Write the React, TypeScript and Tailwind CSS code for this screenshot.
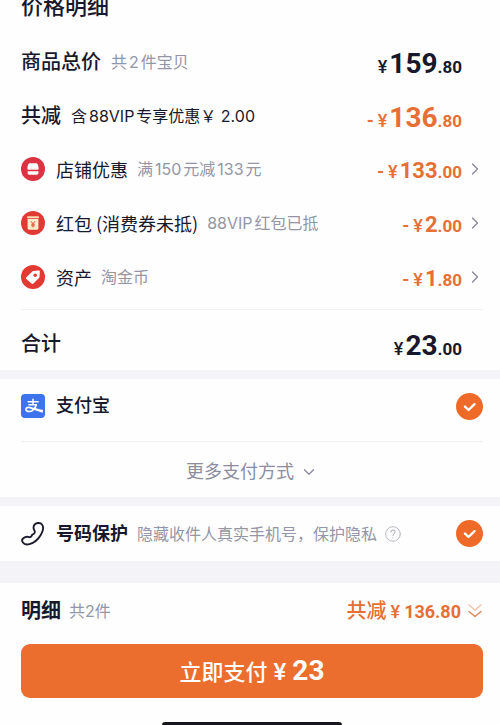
import { useState } from "react";
import type { ReactNode } from "react";
import { ChevronDown, ChevronRight } from "lucide-react";

interface PriceProps {
    whole: string;
    cents: string;
    minus?: boolean;
    large?: boolean;
}

interface Discount {
    id: string;
    label: string;
    note: string;
    whole: string;
    cents: string;
    icon: ReactNode;
}

function StoreIcon() {
    return (
        <svg viewBox="0 0 24 24" className="size-6 shrink-0" aria-hidden="true">
            <circle cx="12" cy="12" r="12" fill="#dc3242" />
            <path d="M8.500 6.200h7c1.300 0 2.100 2.600 2.100 5.600 0 .7-.8 1-1.600 1H8c-.8 0-1.600-.3-1.600-1 0-3 .8-5.600 2.100-5.600z" fill="#fff" />
            <path d="M6.600 14.200h10.800v1.800c0 1-.6 1.700-1.700 1.700H8.300c-1.100 0-1.700-.7-1.700-1.700z" fill="#fff" />
            <path d="M6.400 11.600c1.600 1.600 2.800.3 3.700.3s1 .8 1.900.8 1-.8 1.900-.8 2.100 1.300 3.700-.3" fill="none" stroke="#f3a9b0" strokeWidth=".6" />
        </svg>
    );
}

function RedPacketIcon() {
    return (
        <svg viewBox="0 0 24 24" className="size-6 shrink-0" aria-hidden="true">
            <circle cx="12" cy="12" r="12" fill="#e03a35" />
            <rect x="6" y="5.200" width="12" height="2" rx=".8" fill="#fbdcb4" />
            <path d="M6.600 8h10.800v9.300c0 .9-.5 1.400-1.400 1.400H8c-.9 0-1.400-.5-1.400-1.400z" fill="#fdeccb" />
            <path d="M10 10.200l2 2.500 2-2.500M12 12.700v3.800M10.200 13.200h3.600M10.200 14.900h3.600" fill="none" stroke="#e0503a" strokeWidth="1" />
        </svg>
    );
}

function TagIcon() {
    return (
        <svg viewBox="0 0 24 24" className="size-6 shrink-0" aria-hidden="true">
            <circle cx="12" cy="12" r="12" fill="#e23a33" />
            <path d="M12.300 6.100l5.300-.5c.8-.1 1.300.4 1.200 1.200l-.3 5.200c0 .4-.2.7-.5 1l-5.600 5.600c-.6.6-1.300.6-1.900 0l-5.100-4.500c-.6-.6-.6-1.300 0-1.900l5.900-5.700c.3-.2.6-.4 1-.4z" fill="#fff" />
            <circle cx="14.200" cy="10.200" r="1.700" fill="#e23a33" />
        </svg>
    );
}

function AlipayIcon() {
    return (
        <svg viewBox="0 0 24 24" className="size-6 shrink-0" aria-hidden="true">
            <rect width="24" height="24" rx="4" fill="#3d74ee" />
            <g fill="none" stroke="#fff" strokeLinejoin="round">
                <path d="M6.600 7.700h11M12 4.800v5.700M7.400 10.700h8.400" strokeWidth="1.500" />
                <path d="M15.400 10.500c-.9 3-3.200 7-7.200 7-2.300 0-3.500-1.100-3.300-2.300.3-1.300 1.900-2 3.900-1.600 2.800.5 6.400 2.100 8.700 2.900" strokeWidth="1.700" />
            </g>
            <path d="M13 13.200c3 1.300 6 2.300 9.200 2.800l-.7 2.800c-3.200-.8-6.500-2.400-9.300-4z" fill="#fff" />
        </svg>
    );
}

function PhoneIcon() {
    return (
        <svg viewBox="0 0 24 24" className="size-6 shrink-0" fill="none" stroke="#1b1b2d" strokeWidth="1.900" strokeLinejoin="round" aria-hidden="true">
            <path d="M14.200 2c1.900-1.500 5.300-1.300 6.800.5 1.800 2.300 1.200 6.300-1.100 10.300-2.500 4.300-6.800 8.100-11.400 9.300-2.700.7-5.400.1-6.600-1.600-1-1.400-.9-3.200.4-4.200 1.600-1.300 4.300-1.700 6-1.200 1.300.4 1.600-.2 2.200-1 .3-.6.300-1.200 1-1.500 1.200-.5 2.300-1.300 2.400-2.600.1-1.100-.9-1.800-1.200-3.300-.4-1.700.2-3.700 1.500-4.700z" />
        </svg>
    );
}

function HelpIcon() {
    return (
        <svg viewBox="0 0 16 16" className="size-4" fill="none" stroke="#b9bac4" strokeLinecap="round" aria-hidden="true">
            <circle cx="8" cy="8" r="7.300" />
            <path d="M5.900 6.300c0-1.300.9-2.100 2.100-2.100s2.100.8 2.100 1.900c0 1.400-2.100 1.700-2.100 3.400M8 11.500v.2" strokeWidth="1.200" />
        </svg>
    );
}

function DoubleChevron() {
    return (
        <svg viewBox="0 0 16 16" className="size-4 shrink-0" fill="none" strokeWidth="1.500" strokeLinecap="round" strokeLinejoin="round" aria-hidden="true">
            <path d="M2 2l6 5 6-5" stroke="#f3c4ac" />
            <path d="M2 8.500l6 5 6-5" stroke="#e08a60" />
        </svg>
    );
}

function Price({ whole, cents, minus, large }: PriceProps) {
    return (
        <span className="flex items-baseline pt-1 font-[Roboto,sans-serif] font-bold">
            {minus && <span className="mr-1 text-lg leading-none">-</span>}
            <span className="mr-0.5 text-lg leading-none font-medium">¥</span>
            <span className={large ? "text-[28px] leading-none" : "text-[22px] leading-none"}>{whole}</span>
            <span className="text-[17px] leading-none">.{cents}</span>
        </span>
    );
}

function RoundCheck({ id, checked, onChange }: { id: string; checked: boolean; onChange: () => void }) {
    return (
        <span className="relative flex size-[27px] shrink-0">
            <input
                id={id}
                type="checkbox"
                checked={checked}
                onChange={onChange}
                className="peer size-full cursor-pointer appearance-none rounded-full border border-gray-300 checked:border-transparent checked:bg-[#ef6a28]"
            />
            <svg viewBox="0 0 27 27" className="pointer-events-none absolute inset-0 hidden peer-checked:block" fill="none" stroke="#fff" strokeWidth="2.400" strokeLinecap="round" strokeLinejoin="round" aria-hidden="true">
                <path d="M9 13.600l3.500 3.400 6-5.800" />
            </svg>
        </span>
    );
}

const discounts: Discount[] = [
    { id: 'store', label: '店铺优惠', note: '满150元减133元', whole: '133', cents: '00', icon: <StoreIcon /> },
    { id: 'packet', label: '红包 (消费券未抵)', note: '88VIP红包已抵', whole: '2', cents: '00', icon: <RedPacketIcon /> },
    { id: 'asset', label: '资产', note: '淘金币', whole: '1', cents: '80', icon: <TagIcon /> },
];

export default function App() {
    const [alipay, setAlipay] = useState(true);
    const [protect, setProtect] = useState(true);

    return (
        <div className="flex min-h-screen flex-col overflow-hidden bg-[#fefefe] font-[Inter,'Noto_Sans_CJK_SC',sans-serif] text-[#18182c] [text-autospace:normal]">
            {/* Price breakdown */}
            <section className="pr-[17px] pl-[21px]">
                <header className="flex h-[34px] items-start">
                    <h1 className="-mt-2.5 text-[22px] leading-8 font-medium">价格明细</h1>
                </header>

                <div className="flex h-[54px] items-center justify-between pt-0.5 pr-[21px]">
                    <div className="flex items-center gap-2.5">
                        <h2 className="text-xl font-medium">商品总价</h2>
                        <span className="text-base text-[#9495a6]">共2件宝贝</span>
                    </div>
                    <Price whole="159" cents="80" large />
                </div>

                <div className="flex h-[54px] items-center justify-between pt-0.5 pr-[21px]">
                    <div className="flex items-center gap-2.5">
                        <h2 className="text-xl font-medium">共减</h2>
                        <span className="text-base">含88VIP专享优惠￥ 2.00</span>
                    </div>
                    <div className="text-[#e66f35]">
                        <Price whole="136" cents="80" minus large />
                    </div>
                </div>

                {discounts.map(item => (
                    <button key={item.id} type="button" className="flex h-[54px] w-full cursor-pointer items-center">
                        {item.icon}
                        <span className="ml-[11px] font-['Noto_Sans_CJK_SC',sans-serif] text-lg">{item.label}</span>
                        <span className="ml-[9px] text-base text-[#9495a6]">{item.note}</span>
                        <span className="ml-auto text-[#e66f35]">
                            <Price whole={item.whole} cents={item.cents} minus />
                        </span>
                        <ChevronRight className="ml-[3px] -mr-0.5 size-5 text-[#858693]" strokeWidth={1.5} />
                    </button>
                ))}

                <div className="mt-[5px] flex h-[61px] items-center justify-between border-t border-[#f0f0f2] pt-2 pr-[21px]">
                    <h2 className="text-xl font-medium">合计</h2>
                    <Price whole="23" cents="00" large />
                </div>
            </section>

            {/* Payment method */}
            <section className="border-t-9 border-[#f4f4f8] pr-[17px] pl-[21px]">
                <div className="flex h-[63px] items-center justify-between border-b border-[#f0f0f2] pb-2">
                    <label htmlFor="alipay" className="flex cursor-pointer items-center gap-[11px] text-lg font-medium">
                        <AlipayIcon />
                        支付宝
                    </label>
                    <RoundCheck id="alipay" checked={alipay} onChange={() => setAlipay(!alipay)} />
                </div>
                <button type="button" className="flex h-[55px] w-full cursor-pointer items-center justify-center gap-1.5 pt-1 text-lg text-[#8c8d9f]">
                    更多支付方式
                    <ChevronDown className="size-[18px]" strokeWidth={1.8} />
                </button>
            </section>

            {/* Number protection */}
            <section className="flex h-[64px] items-center border-t-9 border-[#f4f4f8] pr-[17px] pl-[21px]">
                <PhoneIcon />
                <label htmlFor="protect" className="ml-[11px] shrink-0 cursor-pointer text-lg font-semibold">号码保护</label>
                <span className="ml-[9px] text-base whitespace-nowrap text-[#9495a6]">隐藏收件人真实手机号，保护隐私</span>
                <button type="button" aria-label="说明" className="mr-auto ml-2 shrink-0 cursor-pointer">
                    <HelpIcon />
                </button>
                <RoundCheck id="protect" checked={protect} onChange={() => setProtect(!protect)} />
            </section>

            {/* Checkout bar */}
            <footer className="flex grow flex-col border-t-22 border-[#f4f4f8] pr-[17px] pl-[21px]">
                <div className="flex h-14 items-center justify-between">
                    <div className="flex items-center gap-2">
                        <h2 className="text-xl font-semibold">明细</h2>
                        <span className="text-base text-[#9495a6] [text-autospace:no-autospace]">共2件</span>
                    </div>
                    <button type="button" className="flex cursor-pointer items-center gap-1.5 text-[#e66f35]">
                        <span className="flex items-baseline gap-1 font-[Roboto,'Noto_Sans_CJK_SC',sans-serif]">
                            <span className="text-xl leading-none font-medium">共减</span>
                            <span className="text-lg leading-none font-medium">¥</span>
                            <span className="text-lg leading-none font-bold">136.80</span>
                        </span>
                        <DoubleChevron />
                    </button>
                </div>
                <button type="button" className="mt-[5px] flex h-[54px] w-full cursor-pointer items-center justify-center rounded-[9px] bg-[#eb6e2e] text-white">
                    <span className="flex items-baseline gap-1.5 font-[Roboto,'Noto_Sans_CJK_SC',sans-serif]">
                        <span className="text-[22px] leading-none font-medium">立即支付</span>
                        <span className="text-2xl leading-none font-medium">¥</span>
                        <span className="text-[28px] leading-none font-bold">23</span>
                    </span>
                </button>
                <div className="mt-auto h-[3px] w-[180px] self-center rounded-t-sm bg-[#16161c]" />
            </footer>
        </div>
    );
}
